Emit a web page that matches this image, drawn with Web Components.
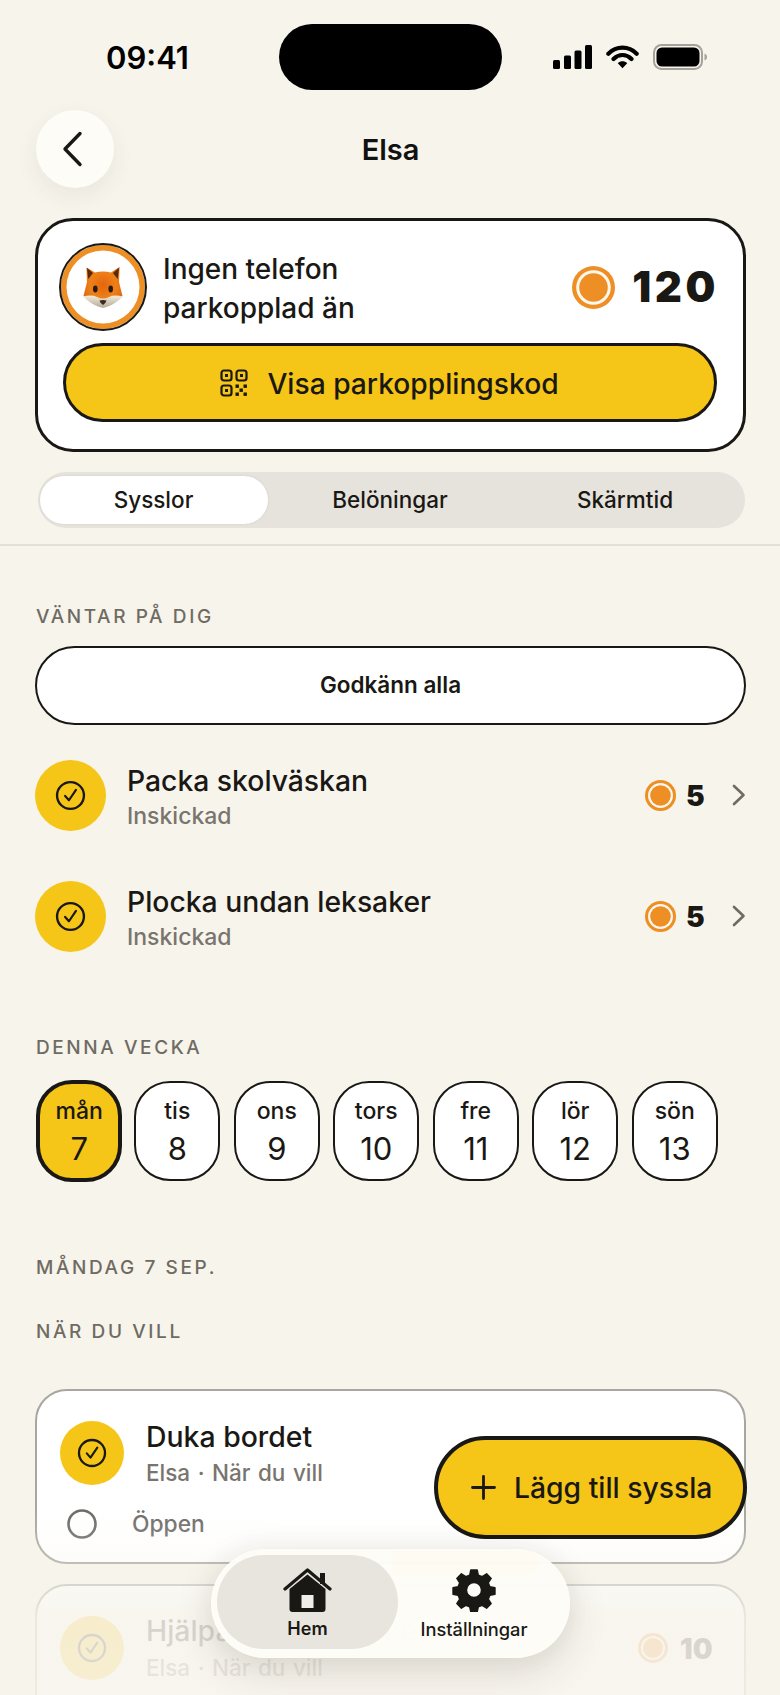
<!DOCTYPE html>
<html lang="sv"><head><meta charset="utf-8"><title>Elsa</title>
<style>
html,body{margin:0;padding:0;background:#F7F4EC}
body{width:780px;height:1695px;overflow:hidden;font-family:Inter,"Liberation Sans",sans-serif;color:#1a1814;position:relative}
</style></head><body>
<app-screen>
  <status-bar></status-bar>
  <nav-header title="Elsa"></nav-header>
  <child-card></child-card>
  <seg-tabs></seg-tabs>
  <hr-line></hr-line>
  <section-label style="margin-top:61.5px">VÄNTAR PÅ DIG</section-label>
  <outline-button style="margin-top:18.7px">Godkänn alla</outline-button>
  <chore-row title="Packa skolväskan" sub="Inskickad" points="5" style="margin-top:35px"></chore-row>
  <chore-row title="Plocka undan leksaker" sub="Inskickad" points="5" style="margin-top:50px"></chore-row>
  <section-label style="margin-top:86.7px">DENNA VECKA</section-label>
  <week-strip></week-strip>
  <section-label style="margin-top:75.8px">MÅNDAG 7 SEP.</section-label>
  <section-label style="margin-top:44.4px">NÄR DU VILL</section-label>
  <task-card title="Duka bordet" sub="Elsa · När du vill" status="Öppen" style="margin-top:46.8px"></task-card>
  <task-card title="Hjälpa till med disken" sub="Elsa · När du vill" points="10" style="margin-top:20px"></task-card>
</app-screen>
<bottom-fade></bottom-fade>
<fab-button>Lägg till syssla</fab-button>
<tab-bar></tab-bar>
<script>
const def=(name,html)=>{customElements.define(name,class extends HTMLElement{
  connectedCallback(){ if(this.shadowRoot) return; const r=this.attachShadow({mode:'open'}); r.innerHTML=typeof html==='function'?html(this):html; }
});};
const CHECK=s=>`<svg width="${s}" height="${s}" viewBox="0 0 30 30" fill="none" stroke="#1a1814" stroke-linecap="round" stroke-linejoin="round"><circle cx="15" cy="15" r="13" stroke-width="2.3"/><path d="M9.8 15.4l3.7 4.2 6.8-10" stroke-width="2.1"/></svg>`;

def('app-screen',`<style>:host{display:flex;flex-direction:column;padding:0 34px 0 35px;box-sizing:border-box;width:780px}</style><slot></slot>`);

def('status-bar',`<style>
:host{display:flex;align-items:center;height:66px;margin:24px -34px 0 -35px}
.t{font:600 31px/1 Inter,sans-serif;color:#000;margin-left:106px;width:84px;flex:none;white-space:nowrap}
.i{width:223px;height:66px;border-radius:33px;background:#000;margin-left:88.5px;flex:none}
.r{display:flex;align-items:center;gap:14px;margin-left:51.5px;margin-top:-1px}
</style>
<div class="t">09:41</div><div class="i"></div>
<div class="r">
<svg width="39" height="24" viewBox="0 0 39 24" fill="#000"><rect x="0" y="15" width="7" height="9" rx="1.5"/><rect x="11" y="10.500" width="7" height="13.500" rx="1.5"/><rect x="21.500" y="5.500" width="7" height="18.500" rx="1.500"/><rect x="32" y="0" width="7" height="24" rx="1.500"/></svg>
<svg width="33" height="26" viewBox="0 0 35 26"><path d="M2.500 9.500C11 1 24 1 32.500 9.500M8 15c5.500-5.500 13.500-5.500 19 0" fill="none" stroke="#000" stroke-width="4.500" stroke-linecap="round"/><path d="M12.500 19.500c3-2.800 7-2.800 10 0L17.500 25z" fill="#000"/></svg>
<svg width="55" height="26" viewBox="0 0 55 26"><rect x="1" y="1" width="48" height="24" rx="7.500" fill="none" stroke="#a5a29b" stroke-width="2"/><rect x="3.500" y="3.500" width="43" height="19" rx="5.500" fill="#000"/><path d="M51.500 9.500c2 .8 2.500 2 2.500 3.500s-.5 2.700-2.500 3.500z" fill="#a5a29b"/></svg>
</div>`);

def('nav-header',h=>`<style>
:host{display:grid;grid-template-columns:78px 1fr 78px;align-items:center;height:78px;margin:20px 0 30px 1px}
button{all:unset;width:78px;height:78px;border-radius:50%;background:#FDFCF7;box-shadow:0 8px 22px rgba(60,50,30,.07);display:flex;align-items:center;justify-content:center}
.t{text-align:center;font:600 29px/1 Inter,sans-serif;color:#111;margin-left:-1px}
</style>
<button aria-label="Tillbaka"><svg width="24" height="36" viewBox="0 0 24 36" fill="none" stroke="#1a1814" stroke-width="3.400" stroke-linecap="round" stroke-linejoin="round" style="margin-left:-5px"><path d="M19 2.500L4 18l15 15.500"/></svg></button>
<div class="t">${h.getAttribute('title')}</div><span></span>`);

def('hr-line',`<style>:host{display:block;height:1.5px;margin:16px -34px 0 -35px;background:#E3E0D8}</style>`);

def('coin-icon',h=>{const s=+h.getAttribute('size')||43;return `<style>:host{display:inline-flex;flex:none}</style>
<svg width="${s}" height="${s}" viewBox="0 0 43 43"><circle cx="21.500" cy="21.500" r="21.500" fill="#EE8F25"/><circle cx="21.500" cy="21.500" r="17.300" fill="#FDF8EE"/><circle cx="21.500" cy="21.500" r="14.300" fill="#EE8F25"/></svg>`});

def('fox-avatar',`<style>
:host{display:flex;width:88px;height:88px;box-sizing:border-box;border-radius:50%;border:2.500px solid #1a1814;background:#fff;box-shadow:inset 0 0 0 5.500px #EE8F25;align-items:center;justify-content:center;flex:none}
</style>
<svg width="42" height="42" viewBox="0 0 42 42">
<defs><radialGradient id="f" cx=".5" cy=".45" r=".6"><stop offset="0" stop-color="#E4650F"/><stop offset=".55" stop-color="#EE8018"/><stop offset="1" stop-color="#D9640F"/></radialGradient>
<linearGradient id="c" x1="0" y1="0" x2="0" y2="1"><stop offset="0" stop-color="#F3EADB"/><stop offset="1" stop-color="#B5A996"/></linearGradient></defs>
<path d="M4.500 1.500L13 6.500Q21 4.500 29 6.500L37.500 1L37 16L40.500 30L21 41L1.500 30L5 16Z" fill="url(#f)"/>
<path d="M5 2L11 7 6.300 13Z M37 1.800L31 7 35.700 13Z" fill="#5b2a0c"/>
<path d="M1 30.500Q10 28.500 15 31Q18 32.500 21 32.500Q24 32.500 27 31Q32 28.500 41 30.500Q33 38 26 40.500L21 42L16 40.500Q9 38 1 30.500Z" fill="url(#c)"/>
<ellipse cx="13.300" cy="23" rx="2.300" ry="3.400" fill="#2a1a10"/><ellipse cx="28.700" cy="23" rx="2.300" ry="3.400" fill="#2a1a10"/>
<path d="M17.500 34.500Q21 33.300 24.500 34.500Q23.500 38 21 39Q18.500 38 17.500 34.500Z" fill="#3a2a20"/>
</svg>`);

def('child-card',`<style>
:host{display:block;box-sizing:border-box;height:234px;width:711px;background:#fff;border:3.500px solid #1a1814;border-radius:38px;padding:22px 25px 0 21px}
.top{display:flex;align-items:center;height:88px}
.txt{font:500 28px/39px Inter,sans-serif;margin-left:16px;flex:1;color:#1a1814;padding-top:3px}
.n{font:900 42px/1 Inter,sans-serif;margin-left:17px;letter-spacing:3.600px;color:#1a1814;margin-right:-1px}
button{all:unset;box-sizing:border-box;display:flex;align-items:center;justify-content:center;gap:19px;width:654px;height:79px;margin:12px 0 0 3.500px;border-radius:40px;background:#F5C518;border:3px solid #1a1814;font:500 28.200px/1 Inter,sans-serif;color:#1a1814}
button span{padding-top:3px}
</style>
<div class="top"><fox-avatar></fox-avatar><div class="txt">Ingen telefon<br>parkopplad än</div><coin-icon size="43"></coin-icon><div class="n">120</div></div>
<button><svg width="28" height="28" viewBox="0 0 28 28" fill="none" stroke="#1a1814" stroke-width="2.200"><rect x="1.500" y="1.500" width="10" height="10" rx="2.500"/><rect x="16.500" y="1.500" width="10" height="10" rx="2.500"/><rect x="1.500" y="16.500" width="10" height="10" rx="2.500"/><g fill="#1a1814" stroke="none"><rect x="5" y="5" width="3" height="3"/><rect x="20" y="5" width="3" height="3"/><rect x="5" y="20" width="3" height="3"/><rect x="15.500" y="15.500" width="3.400" height="3.400"/><rect x="23.500" y="15.500" width="3.400" height="3.400"/><rect x="19.500" y="19.500" width="3.400" height="3.400"/><rect x="15.500" y="23.500" width="3.400" height="3.400"/><rect x="23.500" y="23.500" width="3.400" height="3.400"/></g></svg><span>Visa parkopplingskod</span></button>`);

def('seg-tabs',`<style>
:host{display:flex;box-sizing:border-box;width:707px;height:56px;margin:20px 0 0 2.500px;padding:4px 2px;border-radius:28px;background:#E6E3DC}
div{flex:1;display:flex;align-items:center;justify-content:center;font:500 22.500px/1 Inter,sans-serif;color:#1a1814;border-radius:25px}
.a{flex:none;width:228px;margin-right:5px;background:#fff;box-shadow:0 0 3px rgba(0,0,0,.08)}
</style><div class="a">Sysslor</div><div>Belöningar</div><div>Skärmtid</div>`);

def('section-label',`<style>:host{display:block;font:500 19px/20px Inter,sans-serif;letter-spacing:2.600px;color:#6F6B63;height:20px;margin-left:1px}</style><slot></slot>`);

def('outline-button',`<style>:host{display:flex;box-sizing:border-box;width:711px;height:79px;align-items:center;justify-content:center;background:#fff;border:2.500px solid #1a1814;border-radius:40px;font:600 22.500px/1 Inter,sans-serif;color:#1a1814;padding-top:1px}</style><slot></slot>`);

def('check-badge',h=>{const s=+h.getAttribute('size');const c=+h.getAttribute('check');return `<style>:host{display:flex;flex:none;width:${s}px;height:${s}px;border-radius:50%;background:#F5C518;align-items:center;justify-content:center}</style>${CHECK(c)}`});

def('chore-row',h=>`<style>
:host{display:flex;align-items:center;height:71px}
.m{flex:1;margin-left:21px;min-width:0}
.t{font:500 28.300px/1 Inter,sans-serif;color:#1a1814;margin-top:4px}
.s{font:500 23px/1 Inter,sans-serif;color:#79756E;margin-top:10px}
.n{font:900 28px/1 Inter,sans-serif;width:31px;margin-left:10px;color:#1a1814;padding-top:2px}
svg.c{margin:0 0 0 15px}
</style>
<check-badge size="71" check="31"></check-badge>
<div class="m"><div class="t">${h.getAttribute('title')}</div><div class="s">${h.getAttribute('sub')}</div></div>
<coin-icon size="31"></coin-icon><div class="n">${h.getAttribute('points')}</div>
<svg class="c" width="14" height="22" viewBox="0 0 14 22" fill="none" stroke="#6F6B63" stroke-width="2.600" stroke-linecap="round" stroke-linejoin="round"><path d="M2 2l9.500 9L2 20"/></svg>`);

def('day-chip',h=>{const a=h.hasAttribute('selected');return `<style>
:host{display:flex;flex-direction:column;align-items:center;box-sizing:border-box;width:86.400px;height:${a?102:100}px;margin-top:${a?0:1}px;margin-right:${a?-1.4:0}px;border-radius:36px;border:${a?4:2.500}px solid #1a1814;background:${a?'#F5C518':'#fff'};color:#1a1814;padding-top:${a?15:16}px}
.d{font:500 23px/25px Inter,sans-serif}.n{font:400 31px/36px Inter,sans-serif;margin-top:7px}
</style><div class="d">${h.getAttribute('d')}</div><div class="n">${h.getAttribute('n')}</div>`});

def('week-strip',`<style>:host{display:flex;gap:13.100px;margin:21.800px 0 0 1px;height:102px}</style>
<day-chip d="mån" n="7" selected></day-chip><day-chip d="tis" n="8"></day-chip><day-chip d="ons" n="9"></day-chip><day-chip d="tors" n="10"></day-chip><day-chip d="fre" n="11"></day-chip><day-chip d="lör" n="12"></day-chip><day-chip d="sön" n="13"></day-chip>`);

def('task-card',h=>{const st=h.getAttribute('status'),p=h.getAttribute('points');return `<style>
:host{display:block;box-sizing:border-box;width:711px;height:174.500px;background:#fff;border:2.500px solid #A9A69F;border-radius:32px;padding:30px 24px 0 23px}
.top{display:flex;align-items:center;height:64px}
.m{flex:1;margin-left:22px}
.t{font:500 28.400px/1 Inter,sans-serif;color:#1a1814;margin-top:1px}
.s{font:500 22.500px/1 Inter,sans-serif;word-spacing:1.500px;color:#79756E;margin-top:11px}
.st{display:flex;align-items:center;margin:24px 0 0 7px;font:500 22.800px/1 Inter,sans-serif;color:#6F6E6A}
.st svg{margin-right:35px}
.n{font:900 28px/1 Inter,sans-serif;margin-left:12px;color:#1a1814;width:40px;padding-top:2px}
</style>
<div class="top"><check-badge size="64" check="30"></check-badge><div class="m"><div class="t">${h.getAttribute('title')}</div><div class="s">${h.getAttribute('sub')}</div></div>${p?`<coin-icon size="30"></coin-icon><div class="n">${p}</div>`:''}</div>
${st?`<div class="st"><svg width="30" height="30" viewBox="0 0 30 30"><circle cx="15" cy="15" r="13.500" fill="none" stroke="#6c6c69" stroke-width="2.600"/></svg>${st}</div>`:''}`});

def('bottom-fade',`<style>:host{position:absolute;left:0;right:0;top:1510px;height:185px;background:linear-gradient(to bottom,rgba(247,244,236,0) 0,rgba(247,244,236,.25) 50px,rgba(247,244,236,.6) 73px,rgba(247,244,236,.85) 110px,rgba(247,244,236,.88) 100%)}</style>`);

def('fab-button',`<style>
:host{position:absolute;left:434px;top:1436px;box-sizing:border-box;width:313px;height:103px;display:flex;align-items:center;border-radius:52px;background:#F5C518;border:4.500px solid #1a1814;font:500 28.300px/1 Inter,sans-serif;color:#1a1814;padding-left:33px}
svg{margin-right:18px}
span{padding-top:1px}
</style><svg width="25" height="25" viewBox="0 0 25 25" stroke="#1a1814" stroke-width="2.800" stroke-linecap="round"><path d="M12.500 1.500v22M1.500 12.500h22"/></svg><span><slot></slot></span>`);

def('tab-bar',`<style>
:host{position:absolute;left:211px;top:1549px;box-sizing:border-box;width:359px;height:109px;padding:6px;border-radius:55px;background:rgba(253,252,247,.97);box-shadow:0 14px 40px rgba(60,50,30,.14),0 0 24px rgba(60,50,30,.05);display:flex}
.tab{display:flex;flex-direction:column;align-items:center;box-sizing:border-box;border-radius:47px;height:94px;padding-top:13px;font:500 18px/1 Inter,sans-serif;color:#1a1814;position:relative}
.tab span{margin-top:8px}
.a{width:181px;background:#E8E5DF;font-weight:600}
.b{flex:1;padding-right:14px;font-size:18.300px}
.glow{position:absolute;left:181px;top:1px;width:147px;height:26px;border-radius:0 13px 13px 0;background:rgba(245,197,24,.025)}
</style>
<div class="glow"></div>
<div class="tab a"><svg width="49" height="44" viewBox="0 0 49 44"><path d="M6.500 21L24.500 6.500 42.500 21V41a3 3 0 0 1-3 3H9.500a3 3 0 0 1-3-3Z" fill="#1a1814"/><rect x="18.500" y="27" width="12" height="13" fill="#F0EEE8"/><path d="M2 21L24.500 2 47 21" fill="none" stroke="#1a1814" stroke-width="3.200" stroke-linecap="round" stroke-linejoin="round"/><rect x="37" y="5" width="5" height="11" fill="#1a1814"/></svg><span>Hem</span></div>
<div class="tab b"><svg width="44" height="44" viewBox="0 0 44 44"><path fill="#1a1814" stroke="#1a1814" stroke-width="1.400" stroke-linejoin="round" fill-rule="evenodd" d="M18.800 2h6.400l1.100 5.100 3.900 1.600 4.400-2.900 4.600 4.600-2.900 4.400 1.600 3.900 5.100 1.100v6.400l-5.100 1.100-1.600 3.900 2.900 4.400-4.600 4.600-4.400-2.900-3.900 1.600-1.100 5.100h-6.400l-1.100-5.100-3.900-1.600-4.400 2.900-4.600-4.600 2.900-4.400-1.600-3.900-5.100-1.100v-6.400l5.100-1.100 1.600-3.900-2.900-4.400 4.600-4.600 4.400 2.900 3.900-1.600zM22 14.500a7.500 7.500 0 1 0 0 15 7.500 7.500 0 0 0 0-15z"/></svg><span>Inställningar</span></div>`);
</script>
</body></html>
